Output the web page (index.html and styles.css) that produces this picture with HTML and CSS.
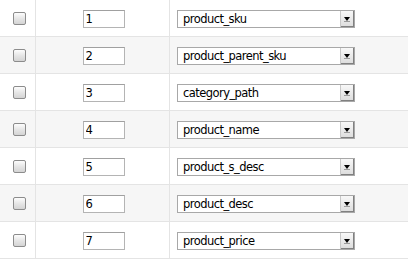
FILE: index.html
```html
<!DOCTYPE html>
<html lang="en">

<head>
    <meta charset="UTF-8">
    <title>Field mapping</title>
    <link rel="stylesheet" href="styles.css">
</head>

<body>

    <table class="map-table">
        <tbody>
            <tr>
                <td class="col-check"><input type="checkbox" class="check"></td>
                <td class="col-order"><input type="text" class="order" value="1"></td>
                <td class="col-field">
                    <div class="field-select">
                        <select><option>product_sku</option></select>
                        <span class="arrow"></span>
                    </div>
                </td>
            </tr>
            <tr>
                <td class="col-check"><input type="checkbox" class="check"></td>
                <td class="col-order"><input type="text" class="order" value="2"></td>
                <td class="col-field">
                    <div class="field-select">
                        <select><option>product_parent_sku</option></select>
                        <span class="arrow"></span>
                    </div>
                </td>
            </tr>
            <tr>
                <td class="col-check"><input type="checkbox" class="check"></td>
                <td class="col-order"><input type="text" class="order" value="3"></td>
                <td class="col-field">
                    <div class="field-select">
                        <select><option>category_path</option></select>
                        <span class="arrow"></span>
                    </div>
                </td>
            </tr>
            <tr>
                <td class="col-check"><input type="checkbox" class="check"></td>
                <td class="col-order"><input type="text" class="order" value="4"></td>
                <td class="col-field">
                    <div class="field-select">
                        <select><option>product_name</option></select>
                        <span class="arrow"></span>
                    </div>
                </td>
            </tr>
            <tr>
                <td class="col-check"><input type="checkbox" class="check"></td>
                <td class="col-order"><input type="text" class="order" value="5"></td>
                <td class="col-field">
                    <div class="field-select">
                        <select><option>product_s_desc</option></select>
                        <span class="arrow"></span>
                    </div>
                </td>
            </tr>
            <tr>
                <td class="col-check"><input type="checkbox" class="check"></td>
                <td class="col-order"><input type="text" class="order" value="6"></td>
                <td class="col-field">
                    <div class="field-select">
                        <select><option>product_desc</option></select>
                        <span class="arrow"></span>
                    </div>
                </td>
            </tr>
            <tr>
                <td class="col-check"><input type="checkbox" class="check"></td>
                <td class="col-order"><input type="text" class="order" value="7"></td>
                <td class="col-field">
                    <div class="field-select">
                        <select><option>product_price</option></select>
                        <span class="arrow"></span>
                    </div>
                </td>
            </tr>
        </tbody>
    </table>

</body>

</html>
```

FILE: styles.css
```css
body {
    margin: 0;
    background-color: #fff;
    font-family: "DejaVu Sans", Verdana, sans-serif;
    font-size: 11px;
    color: #000;
}

.map-table {
    width: 408px;
    border-collapse: collapse;
    table-layout: fixed;
    margin-top: -1px;
}

.map-table td {
    height: 36px;
    padding: 0;
    border-top: 1px solid #e4e4e4;
    border-bottom: 1px solid #e4e4e4;
    vertical-align: middle;
}

.map-table tr:nth-child(even) td {
    background-color: #f6f6f6;
}

.col-check {
    width: 35px;
    border-right: 1px solid #e4e4e4;
    text-align: center;
}

.col-order {
    width: 133px;
    border-right: 1px solid #e4e4e4;
    text-align: center;
}

.col-field {
    padding-left: 7px !important;
}

.check {
    appearance: none;
    -webkit-appearance: none;
    display: block;
    width: 13px;
    height: 13px;
    margin: 1px 0 0 13px;
    border: 1px solid #8c8c8c;
    border-radius: 2px;
    background: linear-gradient(#fdfdfd, #e6e6e6 50%, #d4d4d4);
    box-sizing: border-box;
}

.order {
    width: 42px;
    height: 18px;
    margin: 1px 0 0 2px;
    padding: 0 2px;
    border: 1px solid #b4b4b4;
    border-top-color: #a0a0a0;
    box-sizing: border-box;
    font-family: "DejaVu Sans", Verdana, sans-serif;
    font-size: 11.5px;
    color: #000;
    background-color: #fff;
}

.field-select {
    position: relative;
    display: inline-block;
    width: 178px;
    height: 18px;
    margin-top: 1px;
}

.field-select select {
    appearance: none;
    -webkit-appearance: none;
    display: block;
    width: 178px;
    height: 18px;
    margin: 0;
    padding: 0 0 0 5px;
    border: 1px solid #a8a8a8;
    border-radius: 0;
    box-sizing: border-box;
    background-color: #fff;
    font-family: "DejaVu Sans", Verdana, sans-serif;
    font-size: 11.5px;
    letter-spacing: -0.55px;
    color: #000;
}

.arrow {
    position: absolute;
    top: 1px;
    right: 1px;
    width: 14px;
    height: 16px;
    border-left: 1px solid #c8c8c8;
    background: linear-gradient(#f8f8f8, #dcdcdc);
    box-shadow: inset -1px -1px 0 #808080;
    box-sizing: border-box;
}

.arrow::before {
    content: "";
    position: absolute;
    left: 3px;
    top: 6px;
    border-left: 3px solid transparent;
    border-right: 3px solid transparent;
    border-top: 4px solid #000;
}

.arrow::after {
    content: "";
    position: absolute;
    left: 3px;
    top: 10px;
    width: 6px;
    height: 1px;
    background-color: #9a9a9a;
}
```
